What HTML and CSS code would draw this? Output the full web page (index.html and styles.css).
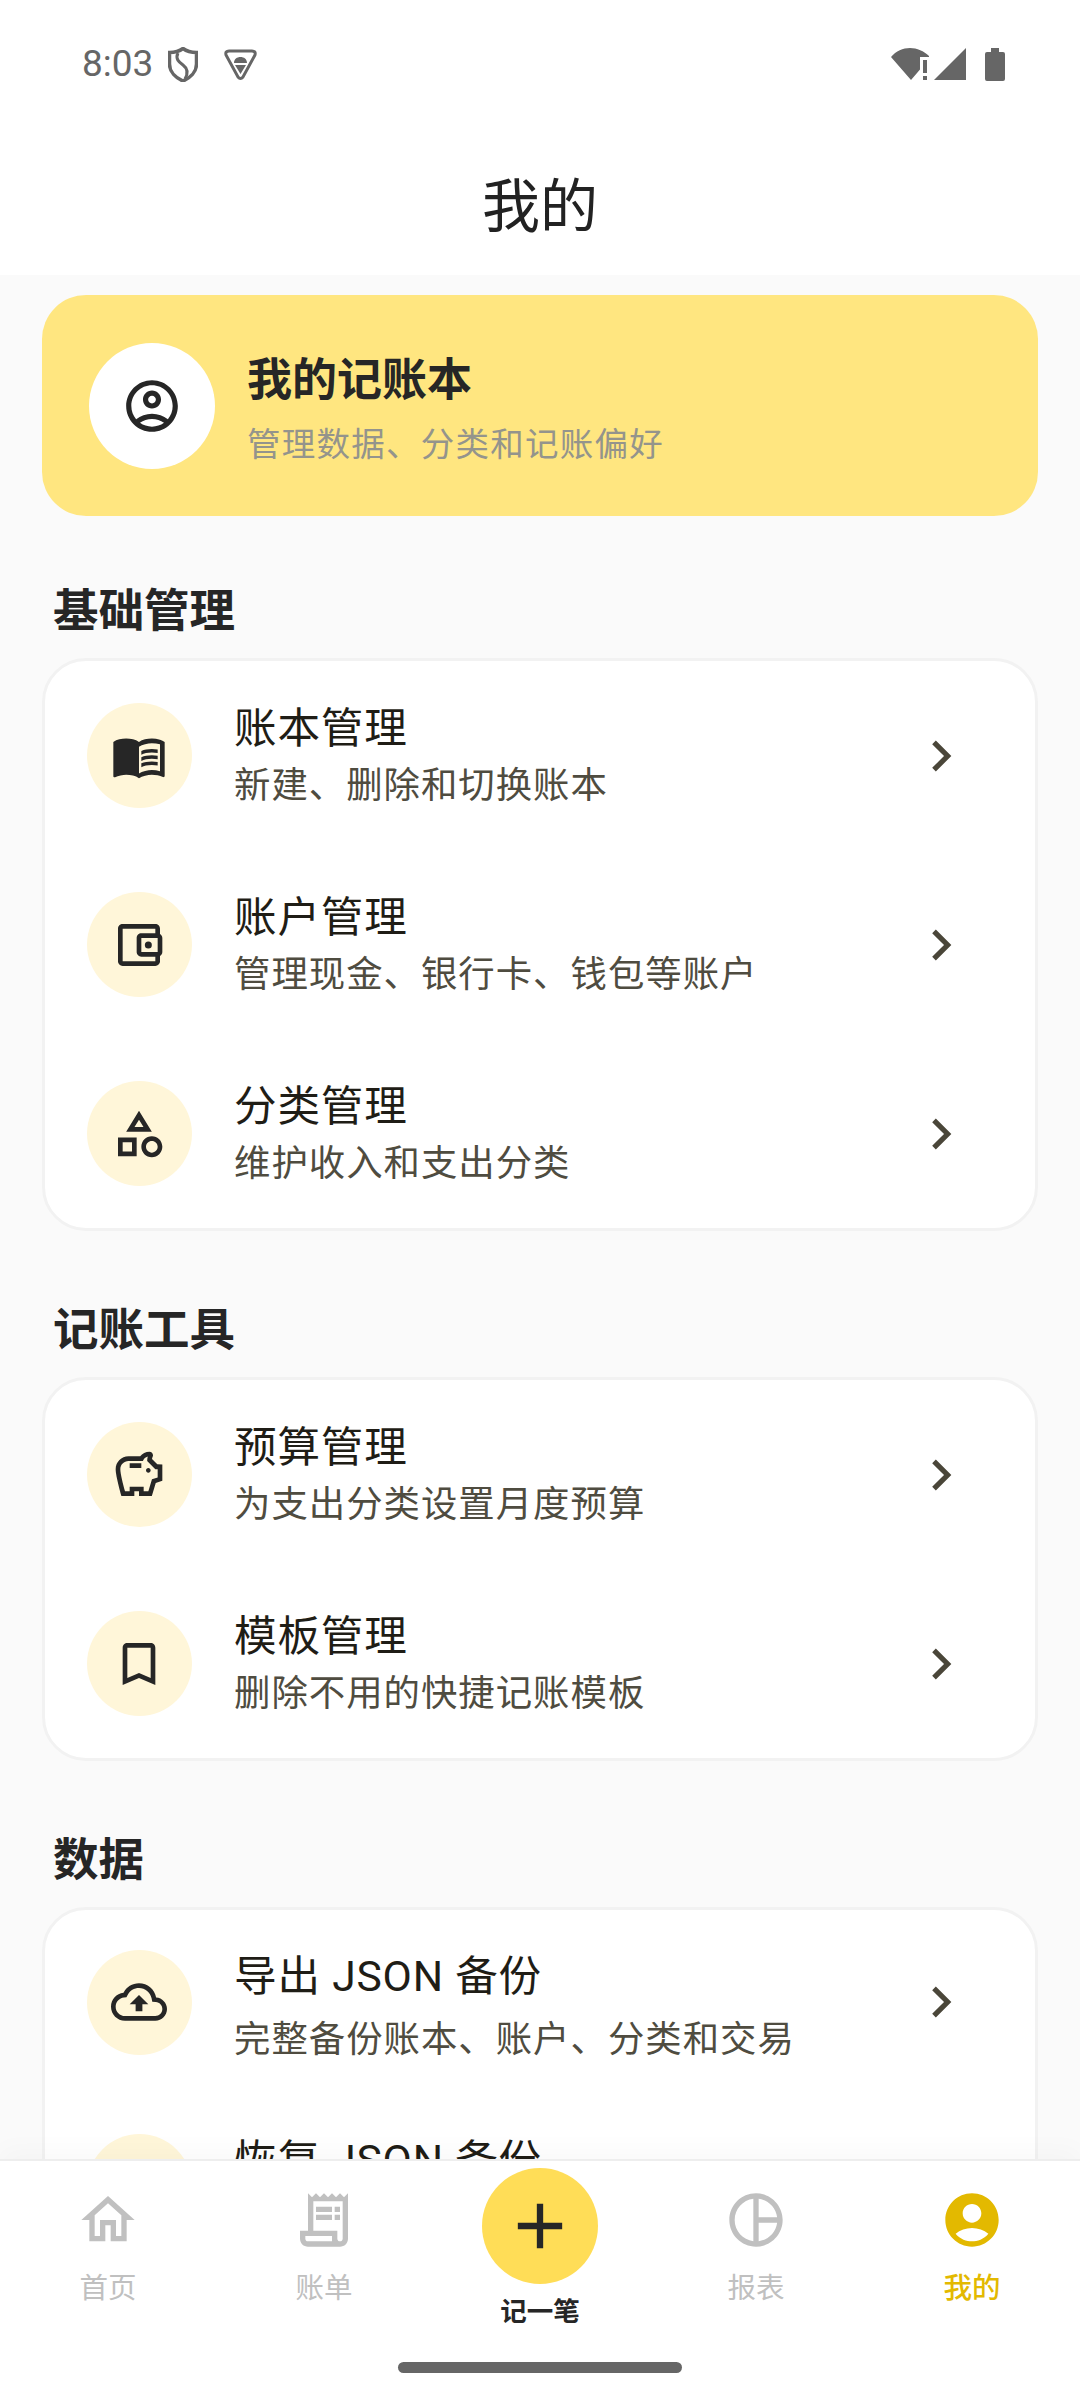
FILE: index.html
```html
<!DOCTYPE html>
<html>
<head>
  <meta charset="utf-8">
  <title>我的</title>
  <link rel="stylesheet" href="styles.css">
</head>
<body>
  <div class="screen">
    <div class="status">
      <span class="time">8:03</span>
      <svg class="shield" viewBox="0 0 30 35"><path d="M15 1.5C19 4.5 24 5.5 28.5 5.5V17C28.5 25 22 31 15 34C8 31 1.5 25 1.5 17V5.5C6 5.5 11 4.5 15 1.5Z" fill="none" stroke="#666" stroke-width="3.5"/><path d="M10 6C7 12 11 15 15 18C19 21 21 25 17 32" fill="none" stroke="#666" stroke-width="3"/></svg>
      <svg class="vpn" viewBox="0 0 33 31"><path d="M5 2H28Q32 2 31 6L19 28Q16.5 31 14 28L2 6Q1 2 5 2Z" fill="none" stroke="#666" stroke-width="3"/><path d="M10 14C10 10 13 8 16.5 8S23 10 23 14Z M11 16H22L16.5 25Z" fill="#666"/></svg>
      <svg class="sys" viewBox="0 0 114 33"><path d="M0 9C5 3 12 0 19 0C26 0 33 3 38 8V9H29V21.5L20 32Z" fill="#666"/><path d="M32 12H36V25H32ZM32 28H36V32H32Z" fill="#666"/><path d="M43 32L75 0V32Z" fill="#666"/><path d="M94 6Q94 4 96 4H100V0H108V4H112Q114 4 114 6V31Q114 33 112 33H96Q94 33 94 31Z" fill="#666"/></svg>
    </div>
    <div class="topbar">我的</div>

    <div class="content">
      <div class="hero">
        <div class="avatar">
          <svg class="hero-icon" viewBox="0 0 24 24"><path d="M12 2C6.48 2 2 6.48 2 12s4.48 10 10 10 10-4.48 10-10S17.52 2 12 2zM7.35 18.5C8.66 17.56 10.26 17 12 17s3.34.56 4.65 1.5c-1.31.94-2.91 1.5-4.65 1.5s-3.34-.56-4.65-1.5zm10.79-1.38C16.45 15.8 14.32 15 12 15s-4.45.8-6.14 2.12C4.7 15.73 4 13.95 4 12c0-4.42 3.58-8 8-8s8 3.58 8 8c0 1.95-.7 3.73-1.86 5.12z"/><path d="M12 6c-1.93 0-3.5 1.57-3.5 3.5S10.07 13 12 13s3.5-1.57 3.5-3.5S13.93 6 12 6zm0 5c-.83 0-1.5-.67-1.5-1.5S11.17 8 12 8s1.5.67 1.5 1.5S12.83 11 12 11z"/></svg>
        </div>
        <div class="hero-text">
          <div class="hero-title">我的记账本</div>
          <div class="hero-sub">管理数据、分类和记账偏好</div>
        </div>
      </div>

      <div class="section">基础管理</div>
      <div class="card">
        <div class="row">
          <div class="badge"><svg class="icon" viewBox="0 0 24 24"><path d="M21 5c-1.11-.35-2.33-.5-3.5-.5-1.95 0-4.05.4-5.5 1.5-1.45-1.1-3.55-1.5-5.5-1.5S2.45 4.9 1 6v14.65c0 .25.25.5.5.5.1 0 .15-.05.25-.05C3.1 20.45 5.05 20 6.5 20c1.95 0 4.05.4 5.5 1.5 1.35-.85 3.8-1.5 5.5-1.5 1.65 0 3.35.3 4.75 1.05.1.05.15.05.25.05.25 0 .5-.25.5-.5V6c-.6-.45-1.25-.75-2-1zm0 13.5c-1.1-.35-2.3-.5-3.5-.5-1.7 0-4.15.65-5.5 1.5V8c1.35-.85 3.8-1.5 5.5-1.5 1.2 0 2.4.15 3.5.5v11.5z"/><path d="M17.5 10.5c.88 0 1.73.09 2.5.26V9.24c-.79-.15-1.64-.24-2.5-.24-1.7 0-3.24.29-4.5.83v1.66c1.13-.64 2.7-.99 4.5-.99zM13 12.49v1.66c1.13-.64 2.7-.99 4.5-.99.88 0 1.73.09 2.5.26V11.9c-.79-.15-1.64-.24-2.5-.24-1.7 0-3.24.3-4.5.83zM17.5 14.33c-1.7 0-3.24.29-4.5.83v1.66c1.13-.64 2.7-.99 4.5-.99.88 0 1.73.09 2.5.26v-1.52c-.79-.16-1.64-.24-2.5-.24z"/></svg></div>
          <div class="row-text"><div class="row-title">账本管理</div><div class="row-sub">新建、删除和切换账本</div></div>
          <svg class="chevron" viewBox="0 0 24 24"><path d="M10 6L8.59 7.41 13.17 12l-4.58 4.59L10 18l6-6z"/></svg>
        </div>
        <div class="row">
          <div class="badge"><svg class="icon" viewBox="0 0 24 24"><path d="M21 7.28V5c0-1.1-.9-2-2-2H5c-1.11 0-2 .9-2 2v14c0 1.1.89 2 2 2h14c1.1 0 2-.9 2-2v-2.28c.59-.35 1-.98 1-1.72V9c0-.74-.41-1.38-1-1.72zM20 9v6h-7V9h7zM5 19V5h14v2h-6c-1.1 0-2 .9-2 2v6c0 1.1.9 2 2 2h6v2H5z"/><circle cx="16" cy="12" r="1.5"/></svg></div>
          <div class="row-text"><div class="row-title">账户管理</div><div class="row-sub">管理现金、银行卡、钱包等账户</div></div>
          <svg class="chevron" viewBox="0 0 24 24"><path d="M10 6L8.59 7.41 13.17 12l-4.58 4.59L10 18l6-6z"/></svg>
        </div>
        <div class="row">
          <div class="badge"><svg class="icon" viewBox="0 0 24 24"><path d="M12 2l-5.5 9h11L12 2zm0 3.84L13.93 9h-3.87L12 5.84zM17.5 13c-2.49 0-4.5 2.01-4.5 4.5s2.01 4.5 4.5 4.5 4.5-2.01 4.5-4.5-2.01-4.5-4.5-4.5zm0 7c-1.38 0-2.5-1.12-2.5-2.5s1.12-2.5 2.5-2.5 2.5 1.12 2.5 2.5-1.12 2.5-2.5 2.5zM3 21.5h8v-8H3v8zm2-6h4v4H5v-4z"/></svg></div>
          <div class="row-text"><div class="row-title">分类管理</div><div class="row-sub">维护收入和支出分类</div></div>
          <svg class="chevron" viewBox="0 0 24 24"><path d="M10 6L8.59 7.41 13.17 12l-4.58 4.59L10 18l6-6z"/></svg>
        </div>
      </div>

      <div class="section">记账工具</div>
      <div class="card">
        <div class="row">
          <div class="badge"><svg class="icon" viewBox="0 0 24 24"><path d="M15 10c0-.55.45-1 1-1s1 .45 1 1-.45 1-1 1-1-.45-1-1zM8 9h5V7H8v2zm14-1.5v6.97l-2.82.94L17.5 21H12v-2h-2v2H4.5S2 12.54 2 9.5 4.46 4 7.5 4h5c.91-1.21 2.36-2 4-2 .83 0 1.5.67 1.5 1.5 0 .21-.04.4-.12.58-.14.32-.26.65-.31 1.01l2.27 2.27L22 7.5zm-2 2h-1L15.5 6c0-.65.09-1.29.26-1.91-.97.25-1.76.97-2.09 1.91H7.5C5.57 6 4 7.57 4 9.5c0 1.88 1.22 6.65 2.01 9.5H8v-2h6v2h2.01l1.55-5.15 2.44-.82V9.5z"/></svg></div>
          <div class="row-text"><div class="row-title">预算管理</div><div class="row-sub">为支出分类设置月度预算</div></div>
          <svg class="chevron" viewBox="0 0 24 24"><path d="M10 6L8.59 7.41 13.17 12l-4.58 4.59L10 18l6-6z"/></svg>
        </div>
        <div class="row">
          <div class="badge"><svg class="icon" viewBox="0 0 24 24"><path d="M17 3H7c-1.1 0-2 .9-2 2v16l7-3 7 3V5c0-1.1-.9-2-2-2zm0 15l-5-2.18L7 18V5h10v13z"/></svg></div>
          <div class="row-text"><div class="row-title">模板管理</div><div class="row-sub">删除不用的快捷记账模板</div></div>
          <svg class="chevron" viewBox="0 0 24 24"><path d="M10 6L8.59 7.41 13.17 12l-4.58 4.59L10 18l6-6z"/></svg>
        </div>
      </div>

      <div class="section">数据</div>
      <div class="card">
        <div class="row row-data">
          <div class="badge"><svg class="icon" viewBox="0 0 24 24"><path d="M19.35 10.04C18.67 6.59 15.64 4 12 4 9.11 4 6.6 5.64 5.35 8.04 2.34 8.36 0 10.91 0 14c0 3.31 2.69 6 6 6h13c2.76 0 5-2.24 5-5 0-2.64-2.05-4.78-4.65-4.96zM19 18H6c-2.21 0-4-1.79-4-4 0-2.05 1.53-3.76 3.56-3.97l1.07-.11.5-.95C8.08 7.14 9.94 6 12 6c2.62 0 4.88 1.86 5.39 4.43l.3 1.5 1.53.11c1.56.1 2.78 1.41 2.78 2.96 0 1.65-1.35 3-3 3zM8 13h2.55v3h2.9v-3H16l-4-4z"/></svg></div>
          <div class="row-text"><div class="row-title">导出 JSON 备份</div><div class="row-sub">完整备份账本、账户、分类和交易</div></div>
          <svg class="chevron" viewBox="0 0 24 24"><path d="M10 6L8.59 7.41 13.17 12l-4.58 4.59L10 18l6-6z"/></svg>
        </div>
        <div class="row row-data">
          <div class="badge"></div>
          <div class="row-text"><div class="row-title">恢复 JSON 备份</div><div class="row-sub row-sub-empty"></div></div>
        </div>
      </div>
    </div>

    <div class="nav">
      <div class="nav-items">
        <div class="nav-item">
          <svg class="nav-icon" viewBox="0 0 24 24"><path d="M12 5.69l5 4.5V18h-2v-6H9v6H7v-7.81l5-4.5M12 3L2 12h3v8h6v-6h2v6h6v-8h3L12 3z"/></svg>
          <span class="nav-label">首页</span>
        </div>
        <div class="nav-item">
          <svg class="nav-icon" viewBox="0 0 24 24"><path d="M19.5 3.5L18 2l-1.5 1.5L15 2l-1.5 1.5L12 2l-1.5 1.5L9 2 7.5 3.5 6 2v14H3v3c0 1.66 1.34 3 3 3h12c1.66 0 3-1.34 3-3V2l-1.5 1.5zM15 20H6c-.55 0-1-.45-1-1v-1h10v2zm4-1c0 .55-.45 1-1 1s-1-.45-1-1v-3H8V5h11v14z"/><path d="M9 7h6v2H9zM16 7h2v2h-2zM9 10h6v2H9zM16 10h2v2h-2z"/></svg>
          <span class="nav-label">账单</span>
        </div>
        <div class="nav-item nav-add">
          <div class="fab"><svg class="fab-icon" viewBox="0 0 24 24"><path d="M19 13h-6v6h-2v-6H5v-2h6V5h2v6h6v2z"/></svg></div>
          <span class="nav-label">记一笔</span>
        </div>
        <div class="nav-item">
          <svg class="nav-icon" viewBox="0 0 24 24"><path d="M12 2C6.49 2 2 6.49 2 12s4.49 10 10 10 10-4.49 10-10S17.51 2 12 2zm1 2.07c3.61.45 6.48 3.33 6.93 6.93H13V4.07zM4 12c0-4.06 3.07-7.44 7-7.93v15.87c-3.93-.5-7-3.88-7-7.94zm9 7.93V13h6.93c-.45 3.61-3.32 6.48-6.93 6.93z"/></svg>
          <span class="nav-label">报表</span>
        </div>
        <div class="nav-item nav-active">
          <svg class="nav-icon" viewBox="0 0 24 24"><path d="M12 2C6.48 2 2 6.48 2 12s4.48 10 10 10 10-4.48 10-10S17.52 2 12 2zm0 4c1.93 0 3.5 1.57 3.5 3.5S13.93 13 12 13s-3.5-1.57-3.5-3.5S10.07 6 12 6zm0 14c-2.03 0-4.43-.82-6.14-2.88C7.55 15.8 9.68 15 12 15s4.45.8 6.14 2.12C16.43 19.18 14.03 20 12 20z"/></svg>
          <span class="nav-label">我的</span>
        </div>
      </div>
      <div class="gesture"></div>
    </div>
  </div>
</body>
</html>
```

FILE: styles.css
```css
html, body {
  margin: 0;
  height: 100%;
  font-family: Roboto, "Noto Sans CJK SC", sans-serif;
}
.screen {
  width: 1080px;
  height: 2400px;
  display: flex;
  flex-direction: column;
  overflow: hidden;
  background: #fafafa;
}

/* status bar */
.status {
  height: 128px;
  flex: none;
  display: flex;
  align-items: center;
  padding: 0 75px 0 82px;
  background: #fff;
  color: #666;
}
.time {
  font-size: 37px;
  line-height: 40px;
}
.shield {
  width: 30px;
  height: 35px;
  margin-left: 15px;
}
.vpn {
  width: 33px;
  height: 31px;
  margin-left: 26px;
}
.sys {
  width: 114px;
  height: 33px;
  margin-left: auto;
}

.topbar {
  height: 137px;
  padding-top: 10px;
  flex: none;
  display: flex;
  align-items: center;
  justify-content: center;
  background: #fff;
  color: #222;
  font-size: 58px;
  line-height: 70px;
}

.content {
  flex: 1;
  min-height: 0;
  overflow: hidden;
  padding: 20px 42px 0;
}

/* yellow card on top */
.hero {
  height: 221px;
  display: flex;
  align-items: center;
  gap: 32px;
  padding-left: 47px;
  border-radius: 44px;
  background: #ffe680;
}
.avatar {
  width: 126px;
  height: 126px;
  flex: none;
  display: flex;
  align-items: center;
  justify-content: center;
  border-radius: 50%;
  background: #fff;
}
.hero-icon {
  width: 62px;
  height: 62px;
  fill: #262626;
}
.hero-text {
  padding-top: 15px;
}
.hero-title {
  font-size: 45px;
  line-height: 64px;
  font-weight: 700;
  color: #262626;
}
.hero-sub {
  font-size: 33.5px;
  line-height: 64px;
  letter-spacing: 1.25px;
  color: #94948c;
}

.section {
  margin: 70px 0 16px 11px;
  font-size: 45.5px;
  line-height: 60px;
  font-weight: 700;
  color: #262626;
}
.hero + .section {
  margin-top: 66px;
}

/* list cards */
.card {
  border: 3px solid #f2f2f2;
  border-radius: 44px;
  background: #fff;
}
.row {
  height: 189px;
  display: flex;
  align-items: center;
  padding: 0 42px;
}
.row-data {
  height: 184px;
}
.badge {
  width: 105px;
  height: 105px;
  flex: none;
  display: flex;
  align-items: center;
  justify-content: center;
  border-radius: 50%;
  background: #fff6d9;
}
.icon {
  width: 56px;
  height: 56px;
  margin-right: 2px;
  fill: #262626;
}
.row-text {
  flex: 1;
  min-width: 0;
  margin-left: 42px;
}
.row-title {
  margin-top: 2px;
  font-size: 42.6px;
  line-height: 59px;
  letter-spacing: 0.8px;
  color: #1f1d16;
}
.row-sub {
  margin-top: -2px;
  font-size: 36.4px;
  line-height: 59px;
  letter-spacing: 1px;
  color: #4f4c40;
}
.row-sub-empty {
  height: 59px;
}
.row-data .row-text {
  padding-top: 13px;
}
.row-data .row-title {
  margin-top: -2px;
}
.row-data .row-sub {
  margin-top: 4px;
}
.chevron {
  width: 62px;
  height: 62px;
  flex: none;
  margin-right: 21px;
  fill: #4a4639;
}

/* bottom nav */
.nav {
  height: 241px;
  flex: none;
  box-sizing: border-box;
  border-top: 2px solid #eee;
  background: #fff;
  box-shadow: 0 -10px 24px rgba(0, 0, 0, 0.025);
  position: relative;
}
.nav-items {
  height: 201px;
  display: grid;
  grid-template-columns: repeat(5, 1fr);
}
.nav-item {
  display: flex;
  flex-direction: column;
  align-items: center;
  padding-top: 27px;
  color: #c0c0c0;
}
.nav-icon {
  width: 64px;
  height: 64px;
  fill: #c0c0c0;
}
.nav-label {
  margin-top: 17px;
  font-size: 28.5px;
  line-height: 40px;
}
.nav-add {
  padding-top: 7px;
  color: #262626;
}
.nav-add .nav-label {
  margin-top: 8px;
  font-size: 26.5px;
  font-weight: 600;
}
.nav-active {
  color: #e3b900;
}
.nav-active .nav-icon {
  fill: #e3b900;
}
.nav-active .nav-label {
  font-weight: 500;
}
.fab {
  width: 116px;
  height: 116px;
  display: flex;
  align-items: center;
  justify-content: center;
  border-radius: 50%;
  background: #ffdd57;
}
.fab-icon {
  width: 76px;
  height: 76px;
  fill: #262626;
}
.gesture {
  width: 284px;
  height: 11px;
  margin: 0 auto;
  border-radius: 6px;
  background: #666;
}
```
